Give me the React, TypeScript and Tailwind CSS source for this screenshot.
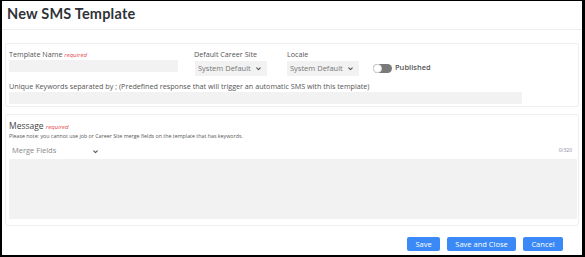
import React from "react";

const Chevron = ({ className = "" }: { className?: string }) => (
  <svg viewBox="0 0 10 10" className={className} fill="none" stroke="#555" strokeWidth="1.6" strokeLinecap="round" strokeLinejoin="round">
    <path d="M2.5 4 L5 6.5 L7.5 4" />
  </svg>
);

const Select = ({ width }: { width: string }) => (
  <div className={`${width} h-[15px] bg-[#f2f2f2] flex items-center justify-between pl-[3px] pr-[5px] text-[7.5px] text-[#777]`}>
    <span>System Default</span>
    <Chevron className="w-[7px] h-[7px]" />
  </div>
);

export default function App() {
  return (
    <div className="w-[585px] h-[257px] bg-white border-t border-l-[2px] border-r-[3px] border-b-[2px] border-black flex flex-col overflow-hidden" style={{ fontFamily: '"Open Sans", "Liberation Sans", sans-serif' }}>
      <div className="h-[29px] border-b border-[#eeeeee] flex items-center pl-[5px] pb-[2px]">
        <h1 className="text-[14.5px] font-bold text-[#2f3337] tracking-[0.2px]" style={{ fontFamily: 'Lato, "Open Sans", sans-serif' }}>New SMS Template</h1>
      </div>
      <div className="px-[3px] flex flex-col">
        <div className="mt-[13px] h-[64px] border border-[#eeeeee] rounded-[3px] px-[3px] pt-[5px]">
          <div className="flex">
            <div className="w-[185px] flex flex-col">
              <div className="h-[11px] text-[7.2px] font-medium text-[#555] leading-[11px]">
                Template Name <span className="italic font-normal text-[#e0474c] text-[6px]">required</span>
              </div>
              <div className="w-[169px] h-[12px] bg-[#f2f2f2]" />
            </div>
            <div className="w-[93px] flex flex-col">
              <div className="h-[11px] text-[7.2px] font-medium text-[#555] leading-[11px]">Default Career Site</div>
              <div className="mt-[1px] ml-[1px]"><Select width="w-[72px]" /></div>
            </div>
            <div className="w-[86px] flex flex-col">
              <div className="h-[11px] text-[7.2px] font-medium text-[#555] leading-[11px]">Locale</div>
              <div className="mt-[1px]"><Select width="w-[72px]" /></div>
            </div>
            <div className="flex items-center mt-[13px] h-[12px] self-start">
              <div className="w-[19px] h-[9px] rounded-full bg-[#7a7a7a] relative">
                <div className="absolute left-0 top-0 w-[9px] h-[9px] rounded-full bg-white border border-[#ddd]" />
              </div>
              <span className="ml-[3px] text-[7.5px] font-semibold text-[#555]">Published</span>
            </div>
          </div>
          <div className="mt-[5px] h-[11px] text-[7.2px] font-medium text-[#555] leading-[11px]">
            Unique Keywords separated by ; (Predefined response that will trigger an automatic SMS with this template)
          </div>
          <div className="w-[513px] h-[12px] bg-[#f2f2f2]" />
        </div>
        <div className="mt-[7px] h-[112px] border border-[#eeeeee] rounded-[3px] px-[3px] pt-[5px] flex flex-col">
          <div className="h-[12px] leading-[12px] text-[8.5px] font-medium text-[#444]">
            Message <span className="italic font-normal text-[#e0474c] text-[6px]">required</span>
          </div>
          <div className="h-[9px] leading-[9px] text-[5.3px] text-[#555]">
            Please note: you cannot use job or Career Site merge fields on the template that has keywords.
          </div>
          <div className="mt-[3px] h-[14px] flex items-center justify-between">
            <div className="w-[90px] flex items-center justify-between pl-[3px] text-[7.5px] text-[#888]">
              <span>Merge Fields</span>
              <Chevron className="w-[7px] h-[7px]" />
            </div>
            <span className="text-[5px] text-[#8a7fa8] mr-[3px]">0/320</span>
          </div>
          <div className="mt-[1px] w-[568px] h-[60px] bg-[#f2f2f2]" />
        </div>
        <div className="mt-[11px] flex justify-end gap-[7px] pr-[16px]">
          <button className="w-[33px] h-[14px] rounded-[2px] bg-[#3b89f6] text-white text-[7.5px] leading-[14px]">Save</button>
          <button className="w-[69px] h-[14px] rounded-[2px] bg-[#3b89f6] text-white text-[7.5px] leading-[14px]">Save and Close</button>
          <button className="w-[40px] h-[14px] rounded-[2px] bg-[#3b89f6] text-white text-[7.5px] leading-[14px]">Cancel</button>
        </div>
      </div>
    </div>
  );
}
